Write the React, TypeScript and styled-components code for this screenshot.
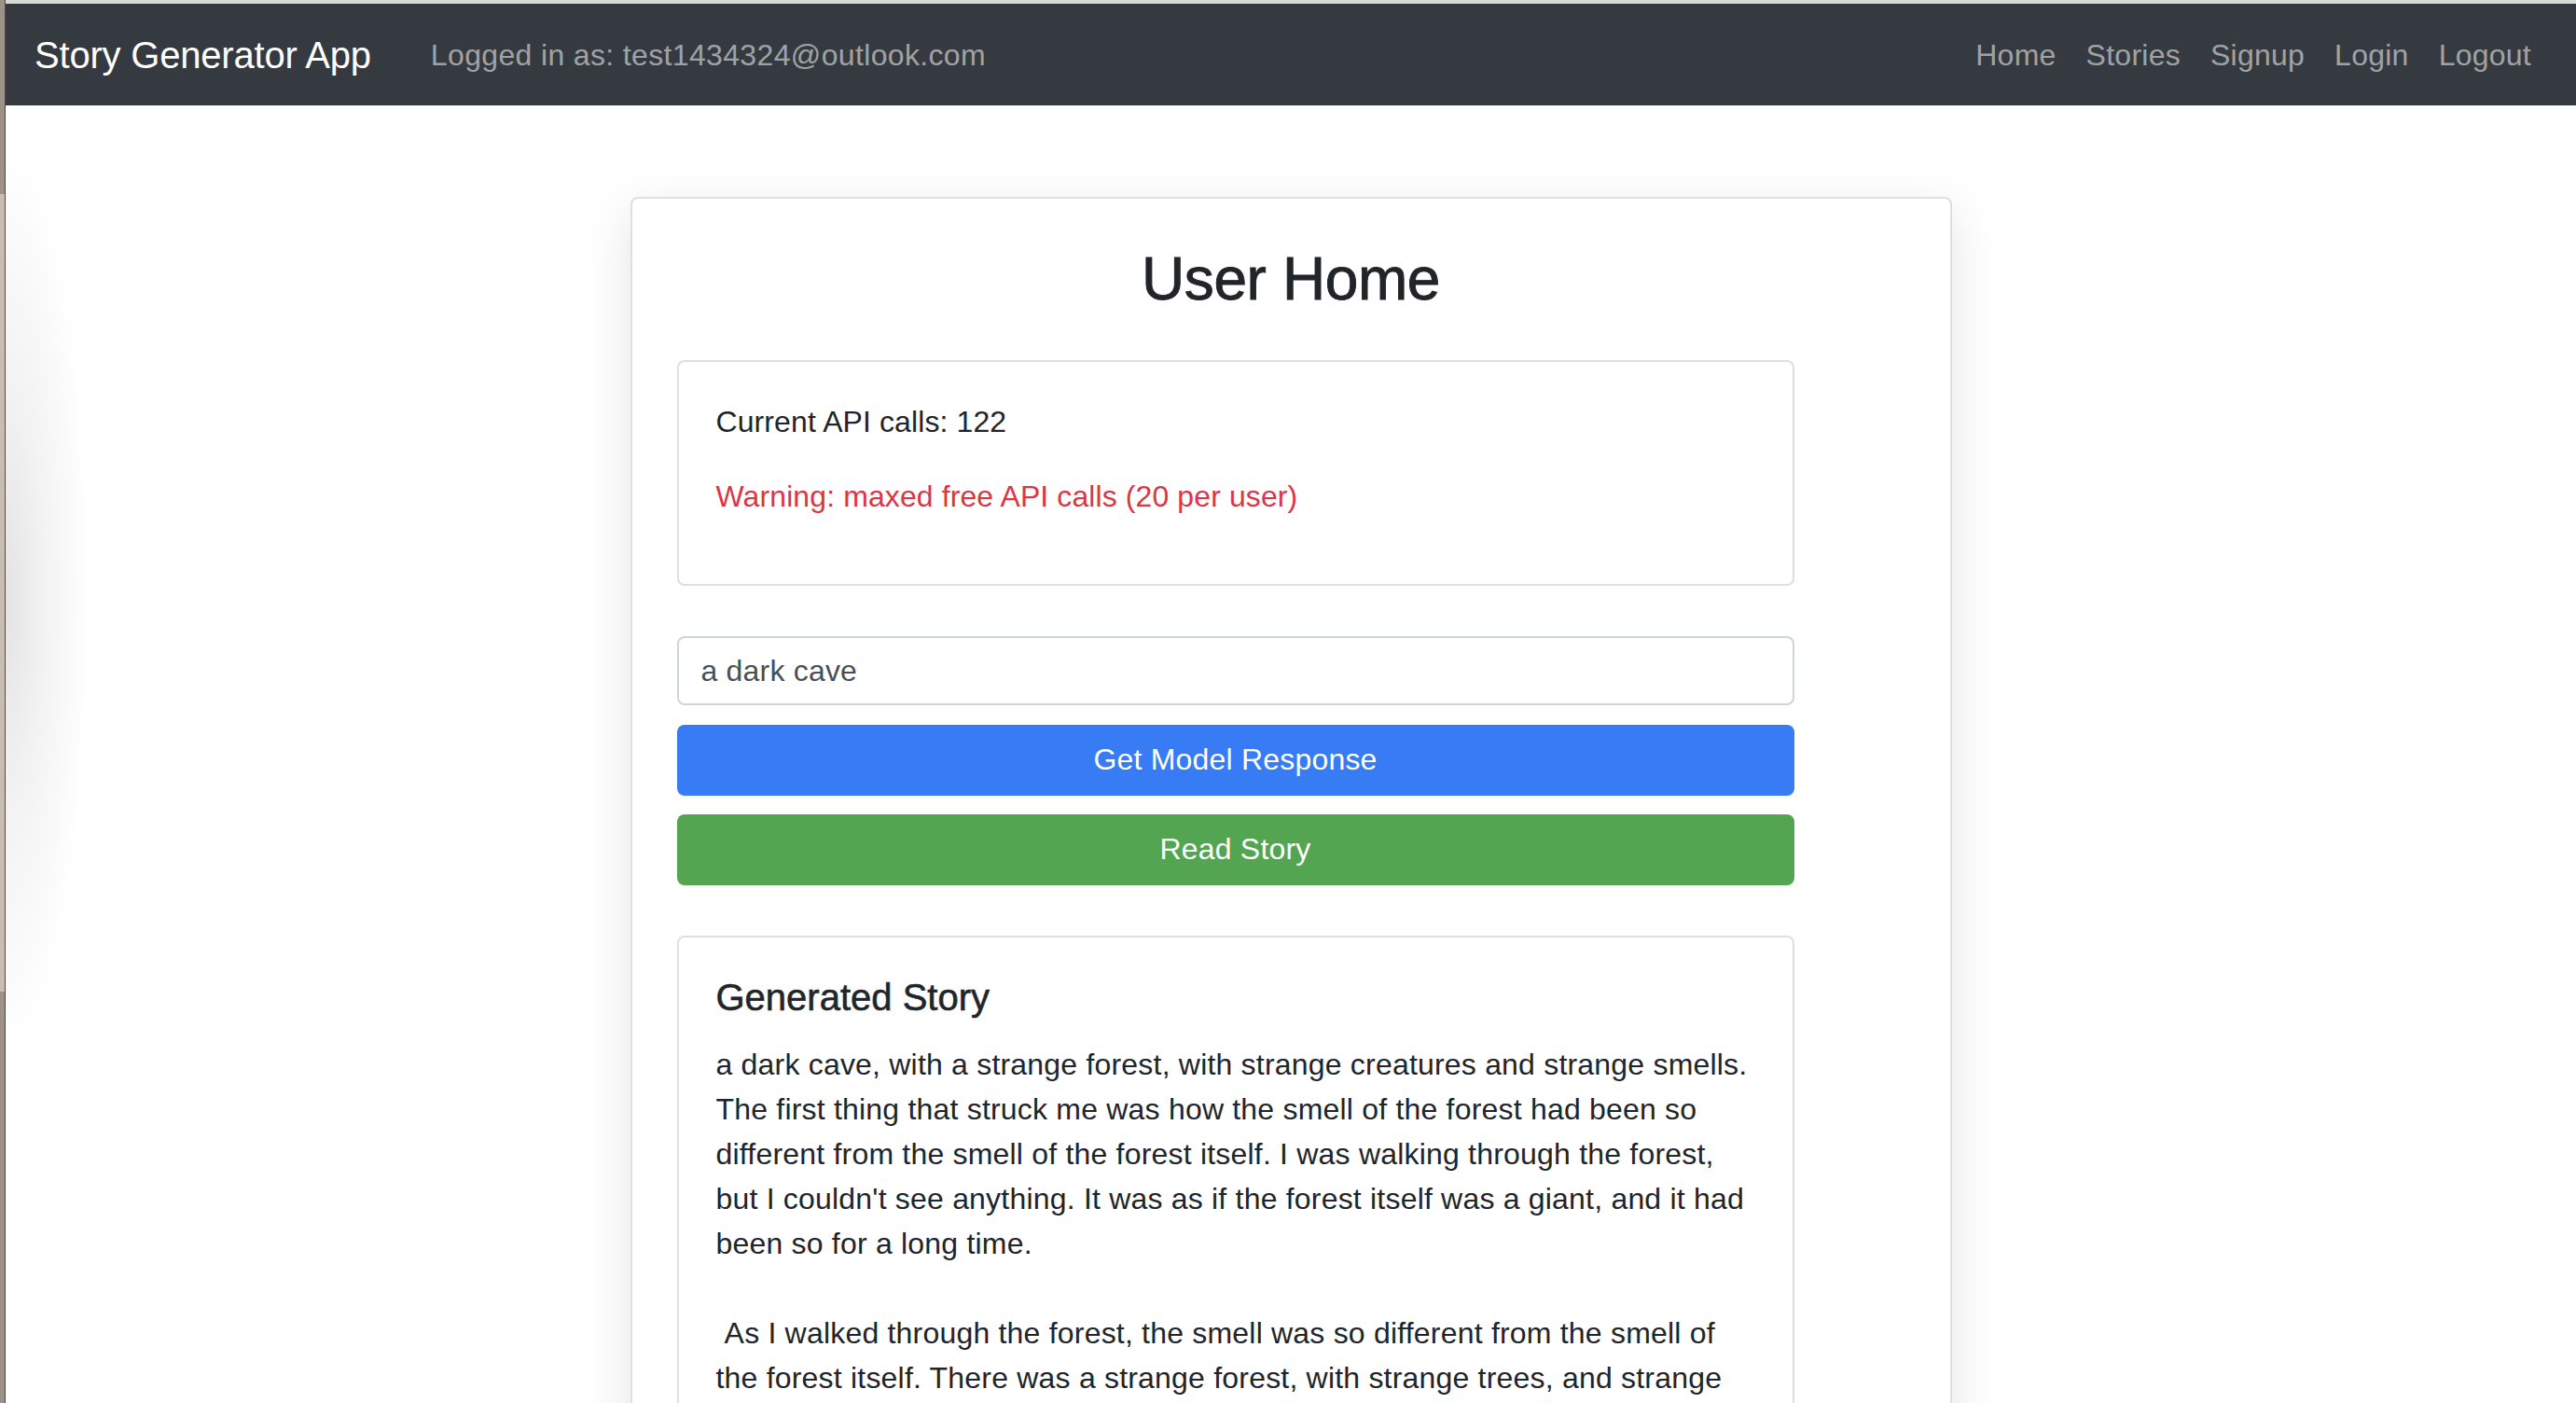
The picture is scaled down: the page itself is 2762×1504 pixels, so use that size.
import React from "react";
import styled, { createGlobalStyle } from "styled-components";

const GlobalStyle = createGlobalStyle`
  html, body {
    margin: 0;
    padding: 0;
    height: 100%;
    overflow: hidden;
    background: #ffffff;
  }
  body {
    font-family: "Liberation Sans", Arial, sans-serif;
    color: #212529;
    -webkit-font-smoothing: antialiased;
  }
  * { box-sizing: border-box; }
`;

const Shell = styled.div`
  display: flex;
  min-height: 100vh;
`;

const DesktopEdge = styled.div`
  width: 6px;
  flex: none;
  border-right: 1px solid #4d4842;
  background: linear-gradient(
    to bottom,
    #9c9288 0,
    #9c9288 208px,
    #c6bdb3 208px,
    #c6bdb3 1063px,
    #9c9288 1063px
  );
`;

const Window = styled.div`
  position: relative;
  flex: 1;
  min-width: 0;
  display: flex;
  flex-direction: column;
`;

const WindowShade = styled.div`
  position: absolute;
  left: 0;
  top: 120px;
  width: 140px;
  height: 1020px;
  pointer-events: none;
  background: radial-gradient(
    ellipse 90px 490px at 0 520px,
    rgba(0, 0, 0, 0.11) 0%,
    rgba(0, 0, 0, 0.05) 45%,
    rgba(0, 0, 0, 0) 100%
  );
`;

const TopStrip = styled.div`
  height: 4px;
  background: #dadad7;
`;

const Navbar = styled.nav`
  height: 109px;
  background: #343a40;
  display: flex;
  align-items: center;
  padding: 1px 32px 0 31px;
`;

const Brand = styled.a`
  font-size: 40px;
  letter-spacing: -0.2px;
  color: #ffffff;
  margin-right: 64px;
  text-decoration: none;
  white-space: nowrap;
`;

const NavText = styled.span`
  font-size: 32px;
  letter-spacing: 0.35px;
  color: rgba(255, 255, 255, 0.55);
  white-space: nowrap;
`;

const NavList = styled.ul`
  display: flex;
  list-style: none;
  margin: 0 0 0 auto;
  padding: 0;
`;

const NavLink = styled.a`
  display: block;
  padding: 0 16px;
  font-size: 32px;
  letter-spacing: 0.25px;
  color: rgba(255, 255, 255, 0.55);
  text-decoration: none;
`;

const Main = styled.main`
  padding-top: 98px;
  display: flex;
  justify-content: center;
`;

const PageCard = styled.section`
  width: 1417px;
  background: #ffffff;
  border: 2px solid rgba(0, 0, 0, 0.125);
  border-radius: 8px;
  padding: 48px;
  box-shadow: 0 16px 56px rgba(0, 0, 0, 0.11);
`;

const PageTitle = styled.h2`
  margin: 0 0 48px;
  font-size: 64px;
  font-weight: 400;
  letter-spacing: -0.4px;
  -webkit-text-stroke: 0.9px #212529;
  line-height: 1.2;
  text-align: center;
  color: #212529;
`;

const Column = styled.div`
  width: 1198px;
  display: flex;
  flex-direction: column;
`;

const Card = styled.div<{ $gap?: number }>`
  border: 2px solid rgba(0, 0, 0, 0.125);
  border-radius: 8px;
  padding: 40px 40px 38px;
  margin-top: ${(p) => p.$gap ?? 0}px;
  background: #ffffff;
`;

const Line = styled.p<{ $danger?: boolean }>`
  margin: 0 0 32px;
  font-size: 32px;
  line-height: 48px;
  letter-spacing: 0.1px;
  color: ${(p) => (p.$danger ? "#dc3545" : "#212529")};
`;

const PromptInput = styled.input`
  margin-top: 54px;
  height: 74px;
  width: 100%;
  padding: 2px 24px 0;
  font-family: inherit;
  font-size: 32px;
  letter-spacing: 0.2px;
  color: #495057;
  background: #ffffff;
  border: 2px solid #ced4da;
  border-radius: 8px;
  outline: none;
`;

const ActionButton = styled.button<{ $tone: "primary" | "success"; $gap: number }>`
  margin-top: ${(p) => p.$gap}px;
  height: 76px;
  width: 100%;
  border: none;
  border-radius: 8px;
  font-family: inherit;
  font-size: 32px;
  letter-spacing: 0.2px;
  color: #ffffff;
  cursor: pointer;
  background: ${(p) => (p.$tone === "primary" ? "#377bf5" : "#53a552")};
`;

const StoryTitle = styled.h5`
  margin: 0 0 24px;
  font-size: 40px;
  font-weight: 400;
  -webkit-text-stroke: 0.6px #212529;
  line-height: 1.2;
  color: #212529;
`;

const StoryText = styled.p`
  margin: 0;
  font-size: 32px;
  line-height: 48px;
  letter-spacing: 0.2px;
  white-space: pre-wrap;
  color: #212529;
`;

const story =
  "a dark cave, with a strange forest, with strange creatures and strange smells. The first thing that struck me was how the smell of the forest had been so different from the smell of the forest itself. I was walking through the forest, but I couldn't see anything. It was as if the forest itself was a giant, and it had been so for a long time.\n\n As I walked through the forest, the smell was so different from the smell of the forest itself. There was a strange forest, with strange trees, and strange creatures everywhere I looked.";

const links = ["Home", "Stories", "Signup", "Login", "Logout"];

export default function App() {
  return (
    <>
      <GlobalStyle />
      <Shell>
        <DesktopEdge />
        <Window>
          <TopStrip />
          <Navbar>
            <Brand href="#">Story Generator App</Brand>
            <NavText>Logged in as: test1434324@outlook.com</NavText>
            <NavList>
              {links.map((l) => (
                <li key={l}>
                  <NavLink href="#">{l}</NavLink>
                </li>
              ))}
            </NavList>
          </Navbar>
          <Main>
            <PageCard>
              <PageTitle>User Home</PageTitle>
              <Column>
                <Card>
                  <Line>Current API calls: 122</Line>
                  <Line $danger>Warning: maxed free API calls (20 per user)</Line>
                </Card>
                <PromptInput defaultValue="a dark cave" />
                <ActionButton $tone="primary" $gap={21}>
                  Get Model Response
                </ActionButton>
                <ActionButton $tone="success" $gap={20}>
                  Read Story
                </ActionButton>
                <Card $gap={54}>
                  <StoryTitle>Generated Story</StoryTitle>
                  <StoryText>{story}</StoryText>
                </Card>
              </Column>
            </PageCard>
          </Main>
          <WindowShade />
        </Window>
      </Shell>
    </>
  );
}
